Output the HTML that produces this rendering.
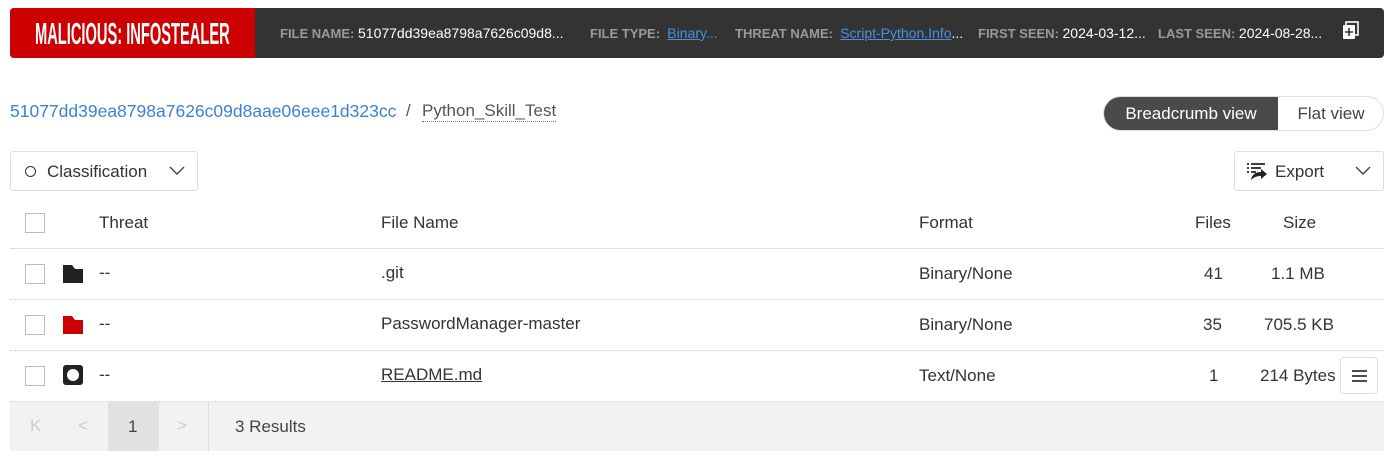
<!DOCTYPE html>
<html><head><meta charset="utf-8"><style>
*{box-sizing:border-box;margin:0;padding:0}
body{width:1393px;height:461px;background:#fff;font-family:"Liberation Sans",sans-serif;color:#333;position:relative;overflow:hidden}
.a{position:absolute}
.banner{left:10px;top:8px;width:1374px;height:50px;background:#333;border-radius:4px;overflow:hidden}
.red{left:0;top:0;width:245px;height:50px;background:#cc0000}
.title{left:25px;top:8px;color:#fff;font-size:31px;font-weight:bold;transform:scaleX(0.473);transform-origin:left;white-space:nowrap;letter-spacing:0}
.meta{top:17px;font-size:13px;white-space:nowrap;font-weight:bold;color:#9a9a9a}
.meta b{color:#fff;font-weight:normal;font-size:14px}
.meta u{color:#4a90e2;font-weight:normal;font-size:14px}
.t17{font-size:17px}
.cb{width:20px;height:20px;border:1px solid #bbb;background:#fff}
.line{left:10px;width:1374px;height:0;border-top:1px dotted #ccc}
</style></head><body>
<div class="a banner">
 <div class="a red"></div>
 <div class="a title">MALICIOUS: INFOSTEALER</div>
 <div class="a meta" style="left:270px">FILE NAME: <b>51077dd39ea8798a7626c09d8...</b></div>
 <div class="a meta" style="left:580px">FILE TYPE:&nbsp; <u>Binar</u><b style="color:#4a90e2">y...</b></div>
 <div class="a meta" style="left:725px">THREAT NAME:&nbsp; <u>Script-Python.Info</u><b>...</b></div>
 <div class="a meta" style="left:968px">FIRST SEEN: <b>2024-03-12...</b></div>
 <div class="a meta" style="left:1148px">LAST SEEN: <b>2024-08-28...</b></div>
 <svg class="a" style="left:1332px;top:13px" width="18" height="20" viewBox="0 0 18 20"><rect x="4" y="1" width="12" height="13" fill="none" stroke="#fff" stroke-width="1.6"/><rect x="1" y="4" width="12" height="14" rx="1" fill="#fff"/><path d="M7 7v8M3 11h8" stroke="#333" stroke-width="1.6"/></svg>
</div>
<div class="a" style="left:10px;top:101px;color:#3b82d6;font-size:17.5px">51077dd39ea8798a7626c09d8aae06eee1d323cc</div>
<div class="a t17" style="left:406px;top:101px;color:#555">/</div>
<div class="a t17" style="left:422px;top:101px;color:#555;border-bottom:1px dotted #3b82d6">Python_Skill_Test</div>
<div class="a" style="left:1103px;top:96px;width:281px;height:35px;border:1px solid #ddd;border-radius:18px;overflow:hidden">
 <div class="a" style="left:0;top:0;width:174px;height:35px;background:#4a4a4a;color:#fff;font-size:17px;text-align:center;line-height:34px">Breadcrumb view</div>
 <div class="a" style="left:174px;top:0;width:106px;height:35px;color:#444;font-size:17px;text-align:center;line-height:34px">Flat view</div>
</div>
<div class="a" style="left:10px;top:151px;width:188px;height:40px;border:1px solid #ddd;border-radius:3px">
 <div class="a" style="left:14px;top:14px;width:11px;height:11px;border:1.5px solid #333;border-radius:50%"></div>
 <div class="a t17" style="left:36px;top:10px;color:#333">Classification</div>
 <svg class="a" style="left:158px;top:14px" width="16" height="10"><path d="M1 1l7 7 7-7" fill="none" stroke="#444" stroke-width="1.4"/></svg>
</div>
<div class="a" style="left:1234px;top:151px;width:150px;height:40px;border:1px solid #ddd;border-radius:3px">
 <svg class="a" style="left:12px;top:11px" width="22" height="18" viewBox="0 0 22 18"><path d="M0 1h2M4 1h14M0 5h2M4 5h10M0 9h2M4 9h5" stroke="#222" stroke-width="1.8"/><path d="M4 17c1-6 5-8 10-8V6l6 5-6 5v-3c-4 0-7 1-10 4z" fill="#222"/></svg>
 <div class="a t17" style="left:40px;top:10px;color:#333">Export</div>
 <svg class="a" style="left:120px;top:14px" width="16" height="10"><path d="M1 1l7 7 7-7" fill="none" stroke="#444" stroke-width="1.4"/></svg>
</div>
<div class="a cb" style="left:25px;top:213px"></div>
<div class="a t17" style="left:99px;top:213px">Threat</div>
<div class="a t17" style="left:381px;top:213px">File Name</div>
<div class="a t17" style="left:919px;top:213px">Format</div>
<div class="a t17" style="left:1195px;top:213px">Files</div>
<div class="a t17" style="left:1283px;top:213px">Size</div>
<div class="a" style="left:10px;top:248px;width:1374px;border-top:1px solid #ddd"></div>
<div class="a cb" style="left:25px;top:264px"></div>
<svg class="a" style="left:63px;top:265px" width="20" height="18"><path d="M0 0h9l3 4h8v14H0z" fill="#222"/></svg>
<div class="a t17" style="left:99px;top:263px">--</div>
<div class="a t17" style="left:381px;top:263px">.git</div>
<div class="a t17" style="left:919px;top:264px">Binary/None</div>
<div class="a t17" style="left:1204px;top:264px">41</div>
<div class="a t17" style="left:1271px;top:264px">1.1 MB</div>
<div class="a line" style="top:299px"></div>
<div class="a cb" style="left:25px;top:315px"></div>
<svg class="a" style="left:63px;top:316px" width="20" height="18"><path d="M0 0h9l3 4h8v14H0z" fill="#cc0000"/></svg>
<div class="a t17" style="left:99px;top:314px">--</div>
<div class="a t17" style="left:381px;top:314px">PasswordManager-master</div>
<div class="a t17" style="left:919px;top:315px">Binary/None</div>
<div class="a t17" style="left:1203px;top:315px">35</div>
<div class="a t17" style="left:1264px;top:315px">705.5 KB</div>
<div class="a line" style="top:350px"></div>
<div class="a cb" style="left:25px;top:366px"></div>
<svg class="a" style="left:63px;top:365px" width="20" height="20"><rect width="20" height="20" rx="3" fill="#222"/><circle cx="10" cy="10" r="6" fill="#fff"/></svg>
<div class="a t17" style="left:99px;top:365px">--</div>
<div class="a t17" style="left:381px;top:365px;text-decoration:underline">README.md</div>
<div class="a t17" style="left:919px;top:366px">Text/None</div>
<div class="a t17" style="left:1209px;top:366px">1</div>
<div class="a t17" style="left:1260px;top:366px">214 Bytes</div>
<div class="a" style="left:1340px;top:357px;width:38px;height:37px;border:1px solid #ddd;border-radius:4px;background:#fff">
 <svg class="a" style="left:11px;top:12px" width="15" height="12"><path d="M0 1h15M0 6h15M0 11h15" stroke="#333" stroke-width="1.8"/></svg>
</div>
<div class="a line" style="top:401px"></div>
<div class="a" style="left:10px;top:402px;width:1374px;height:49px;background:#f2f2f2">
 <div class="a" style="left:98px;top:0;width:51px;height:49px;background:#e2e2e2"></div>
 <div class="a" style="left:198px;top:0;width:1px;height:49px;background:#ddd"></div>
 <div class="a t17" style="left:20px;top:14px;color:#ccc">K</div>
 <div class="a t17" style="left:68px;top:14px;color:#ccc">&lt;</div>
 <div class="a t17" style="left:118px;top:15px;color:#444">1</div>
 <div class="a t17" style="left:167px;top:14px;color:#ccc">&gt;</div>
 <div class="a t17" style="left:225px;top:15px;color:#444">3 Results</div>
</div>
</body></html>
